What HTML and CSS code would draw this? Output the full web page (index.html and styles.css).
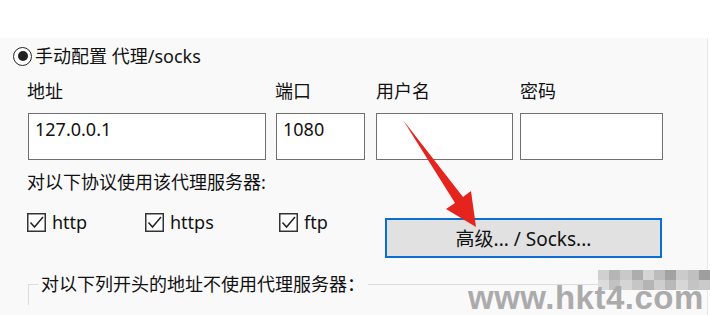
FILE: index.html
```html
<!DOCTYPE html>
<html lang="zh-CN">
<head>
    <meta charset="UTF-8">
    <title>代理设置</title>
    <link rel="stylesheet" href="styles.css">
</head>
<body>
    <div class="top-strip"></div>
    <div class="panel">
        <div class="radio-row">
            <span class="radio"><span class="radio-dot"></span></span>
            <span>手动配置 代理/socks</span>
        </div>

        <div class="fields">
            <div class="field field-addr">
                <div class="label">地址</div>
                <div class="box">127.0.0.1</div>
            </div>
            <div class="field field-port">
                <div class="label">端口</div>
                <div class="box">1080</div>
            </div>
            <div class="field field-user">
                <div class="label">用户名</div>
                <div class="box"></div>
            </div>
            <div class="field field-pass">
                <div class="label">密码</div>
                <div class="box"></div>
            </div>
        </div>

        <div class="hint">对以下协议使用该代理服务器:</div>

        <div class="proto-row">
            <label class="check check-http">
                <svg class="check-box" width="19" height="19" viewBox="0 0 19 19">
                    <rect x="0.75" y="0.75" width="17.5" height="17.5" fill="#fff" stroke="#333" stroke-width="1.5"/>
                    <path d="M3.5 9.5 L7.5 14 L16 4" fill="none" stroke="#222" stroke-width="1.5"/>
                </svg>
                http
            </label>
            <label class="check check-https">
                <svg class="check-box" width="19" height="19" viewBox="0 0 19 19">
                    <rect x="0.75" y="0.75" width="17.5" height="17.5" fill="#fff" stroke="#333" stroke-width="1.5"/>
                    <path d="M3.5 9.5 L7.5 14 L16 4" fill="none" stroke="#222" stroke-width="1.5"/>
                </svg>
                https
            </label>
            <label class="check check-ftp">
                <svg class="check-box" width="19" height="19" viewBox="0 0 19 19">
                    <rect x="0.75" y="0.75" width="17.5" height="17.5" fill="#fff" stroke="#333" stroke-width="1.5"/>
                    <path d="M3.5 9.5 L7.5 14 L16 4" fill="none" stroke="#222" stroke-width="1.5"/>
                </svg>
                ftp
            </label>
            <button class="adv-button">高级... / Socks...</button>
        </div>

        <div class="group">
            <span class="group-title">对以下列开头的地址不使用代理服务器：</span>
        </div>
    </div>

    <svg class="arrow" width="710" height="315" viewBox="0 0 710 315">
        <polygon points="403,120 463,197 471,191 476,227 446,209 455,203" fill="#e5241d"/>
    </svg>

    <div class="mosaic">
        <span style="background:#d0d0d0"></span><span style="background:#b5b5b5"></span><span style="background:#c9c9c9"></span><span style="background:#adadad"></span><span style="background:#d4d4d4"></span><span style="background:#bcbcbc"></span><span style="background:#a2a2a2"></span><span style="background:#cbcbcb"></span><span style="background:#c0c0c0"></span><span style="background:#9e9e9e"></span>
        <span style="background:#dcdcdc"></span><span style="background:#c2c2c2"></span><span style="background:#d5d5d5"></span><span style="background:#c6c6c6"></span><span style="background:#b4b4b4"></span><span style="background:#cecece"></span><span style="background:#b9b9b9"></span><span style="background:#d7d7d7"></span><span style="background:#c4c4c4"></span><span style="background:#cacaca"></span>
    </div>

    <div class="watermark">www.hkt4.com</div>
</body>
</html>
```

FILE: styles.css
```css
html, body {
    margin: 0;
    padding: 0;
    height: 315px;
    overflow: hidden;
    background-color: #fff;
}

body {
    font-family: "Noto Sans", "Noto Sans CJK SC", sans-serif;
    font-size: 18px;
    color: #111;
    position: relative;
}

.top-strip {
    height: 38px;
    background-color: #fff;
}

.panel {
    width: 708px;
    height: 277px;
    box-sizing: border-box;
    background-color: #f9f9fa;
    border-right: 1px solid #e6e6e6;
    padding: 6px 0 0 27px;
}

.radio-row {
    display: flex;
    align-items: center;
    height: 24px;
    line-height: 24px;
    margin-left: -14px;
    gap: 3px;
}

.radio {
    width: 19px;
    height: 19px;
    box-sizing: border-box;
    border: 1.5px solid #222;
    border-radius: 50%;
    background-color: #fff;
    display: flex;
    align-items: center;
    justify-content: center;
    flex-shrink: 0;
}

.radio-dot {
    width: 10px;
    height: 10px;
    border-radius: 50%;
    background-color: #222;
}

.fields {
    display: flex;
    margin-top: 11px;
}

.label {
    height: 24px;
    line-height: 24px;
    margin-bottom: 10px;
}

.box {
    height: 47px;
    box-sizing: border-box;
    border: 1px solid #707070;
    background-color: #fff;
    padding: 3px 6px;
    line-height: 24px;
}

.field-addr { width: 238px; margin-left: 1px; margin-right: 10px; }
.field-port { width: 89px; margin-right: 11px; }
.field-user { width: 137px; margin-right: 7px; }
.field-pass { width: 143px; }

.field-port .label,
.field-addr .label { margin-left: -1px; }

.hint {
    margin-top: 10px;
    height: 24px;
    line-height: 24px;
}

.proto-row {
    display: flex;
    align-items: flex-start;
    margin-top: 16px;
    margin-left: 0;
}

.check {
    display: flex;
    align-items: center;
    gap: 6px;
    height: 24px;
    line-height: 24px;
}

.check-box {
    flex-shrink: 0;
}

.check-http { width: 118px; }
.check-https { width: 134px; }
.check-ftp { width: 106px; }

.adv-button {
    margin-top: 8px;
    width: 277px;
    height: 40px;
    border: 2px solid #0a6fd0;
    background-color: #e1e1e1;
    font-family: "Noto Sans", "Noto Sans CJK SC", sans-serif;
    font-size: 19px;
    color: #111;
    padding: 0;
    cursor: pointer;
}

.group {
    margin-top: 26px;
    margin-left: 1px;
    height: 20px;
    border-top: 1px solid #dcdcdc;
    border-left: 1px solid #dcdcdc;
}

.group-title {
    display: inline-block;
    margin-top: -13px;
    margin-left: 9px;
    padding: 0 3px;
    line-height: 24px;
    background-color: #f9f9fa;
    vertical-align: top;
}

.arrow {
    position: absolute;
    left: 0;
    top: 0;
    pointer-events: none;
}

.mosaic {
    position: absolute;
    left: 598px;
    top: 270px;
    width: 112px;
    height: 20px;
    display: grid;
    grid-template-columns: repeat(10, 1fr);
    grid-template-rows: repeat(2, 1fr);
}

.watermark {
    position: absolute;
    left: 468px;
    top: 283px;
    font-family: "Liberation Sans", Arial, sans-serif;
    font-weight: bold;
    font-size: 33px;
    line-height: 30px;
    color: #ababab;
    letter-spacing: 0.5px;
}
```
